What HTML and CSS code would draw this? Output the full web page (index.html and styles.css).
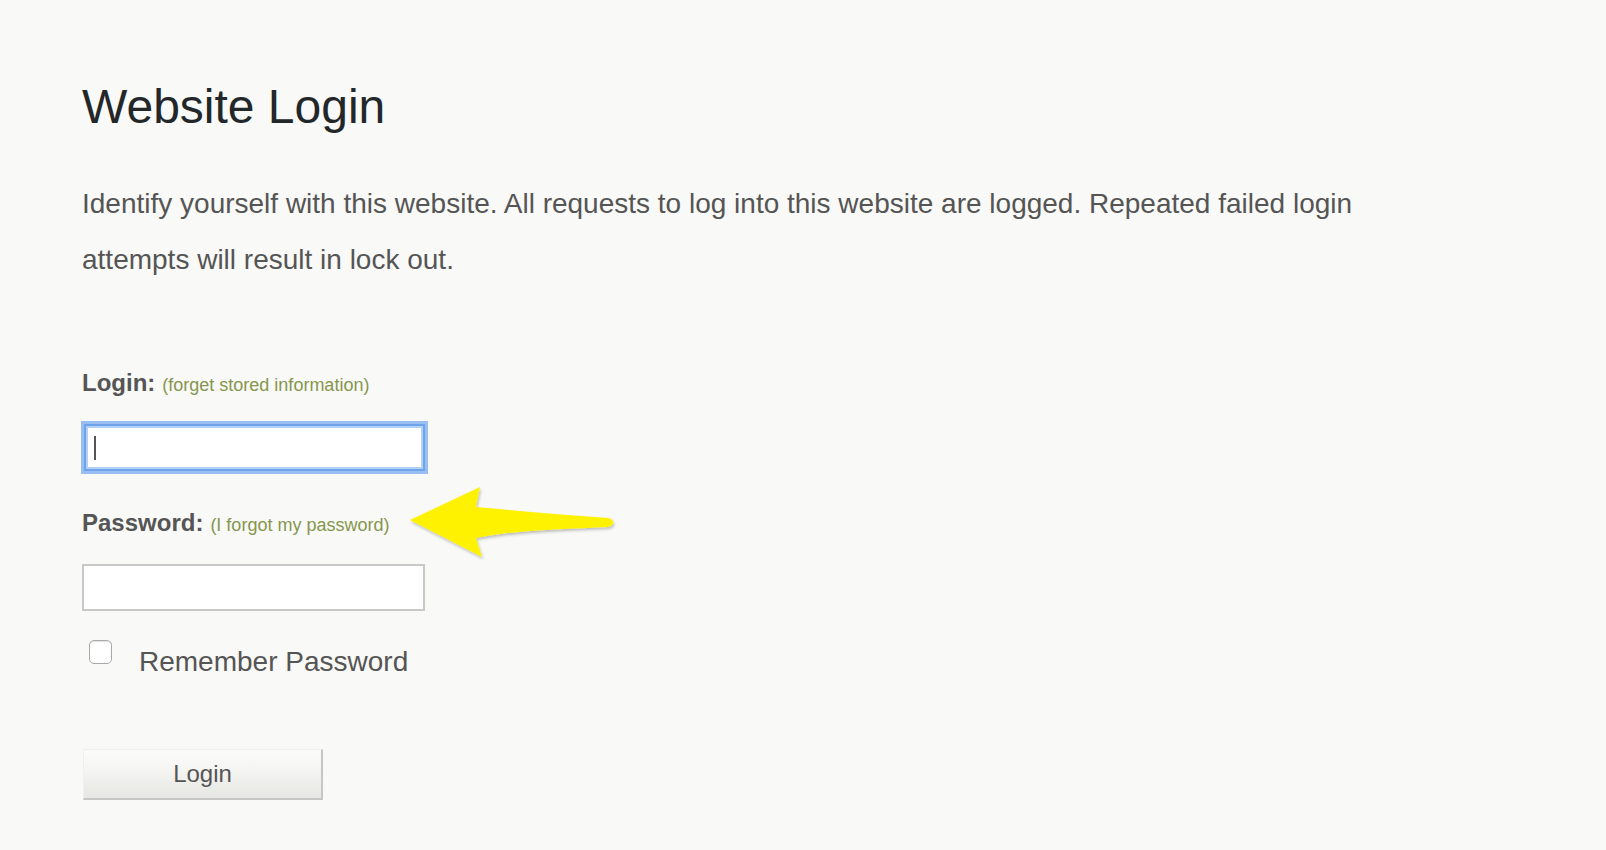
FILE: index.html
```html
<!DOCTYPE html>
<html lang="en">
<head>
<meta charset="utf-8">
<title>Website Login</title>
<link rel="stylesheet" href="styles.css">
</head>
<body>
<main class="page">
  <h1 class="title">Website Login</h1>
  <p class="intro">Identify yourself with this website. All requests to log into this website are logged. Repeated failed login attempts will result in lock out.</p>
  <form class="login-form">
    <div class="field-label"><span class="label">Login:</span><a class="hint" href="#">(forget stored information)</a></div>
    <div class="input-wrap">
      <input class="text-input focused" type="text" aria-label="Login">
      <span class="caret"></span>
    </div>
    <div class="field-label password-label">
      <span class="label">Password:</span><a class="hint" href="#">(I forgot my password)</a>
      <svg class="arrow" width="230" height="95" viewBox="0 0 230 95" aria-hidden="true">
        <defs>
          <filter id="sh" x="-10%" y="-20%" width="120%" height="140%">
            <feDropShadow dx="1" dy="2" stdDeviation="1.5" flood-color="#000" flood-opacity="0.25"/>
          </filter>
        </defs>
        <path d="M10 45 L80 12 L76 32 C120 36 165 40 208 43 C215 44 215 51 208 52 C165 54 115 55 76 63 L82 82 Z" fill="#fff200" filter="url(#sh)"/>
      </svg>
    </div>
    <input class="text-input" type="password" aria-label="Password">
    <label class="remember"><span class="checkbox"></span><span class="remember-text">Remember Password</span></label>
    <button class="btn" type="button">Login</button>
  </form>
</main>
</body>
</html>
```
FILE: styles.css
```css
html, body {
  margin: 0;
  padding: 0;
  background: #f9f9f7;
}
body {
  font-family: "Liberation Sans", Arial, Helvetica, sans-serif;
  color: #555;
}
.page {
  padding: 83px 0 0 82px;
}
.title {
  margin: 0;
  font-size: 48px;
  line-height: 48px;
  font-weight: normal;
  color: #23272a;
}
.intro {
  margin: 45px 0 0 0;
  width: 1320px;
  font-size: 28px;
  line-height: 56px;
  color: #555;
}
.login-form {
  margin-top: 80px;
  display: flex;
  flex-direction: column;
  align-items: flex-start;
}
.field-label {
  display: flex;
  align-items: baseline;
  gap: 7px;
  height: 30px;
  line-height: 30px;
}
.label {
  font-size: 24px;
  font-weight: bold;
  color: #555;
}
.hint {
  font-size: 18px;
  color: #86964e;
  text-decoration: none;
}
.password-label {
  position: relative;
  margin-top: 37px;
}
.arrow {
  position: absolute;
  left: 318px;
  top: -33px;
}
.input-wrap {
  position: relative;
  margin-top: 26px;
}
.text-input {
  display: block;
  box-sizing: border-box;
  width: 343px;
  height: 47px;
  margin: 0;
  padding: 0 10px;
  background: #fff;
  border: 2px solid #c8c8c8;
  font-size: 20px;
  outline: none;
}
.password-label + .text-input {
  margin-top: 26px;
}
.text-input.focused {
  margin-left: 2px;
  width: 341px;
  border: 2px solid #6fa3ec;
  box-shadow: 0 0 0 3px rgba(120, 170, 240, 0.75), inset 0 0 0 2px #b3d0f6;
}
.caret {
  position: absolute;
  left: 12px;
  top: 12px;
  width: 2px;
  height: 24px;
  background: #555;
}
.remember {
  display: flex;
  align-items: flex-start;
  margin-top: 29px;
  margin-left: 7px;
}
.checkbox {
  box-sizing: border-box;
  width: 23px;
  height: 24px;
  border: 1px solid #a9a9a9;
  border-radius: 5px;
  background: #fff;
  box-shadow: inset 0 1px 1px rgba(0,0,0,0.12);
}
.remember-text {
  margin-left: 27px;
  margin-top: 5px;
  font-size: 28px;
  line-height: 34px;
  color: #555;
}
.btn {
  margin-top: 70px;
  margin-left: 1px;
  width: 240px;
  height: 51px;
  padding: 0;
  font-family: "Liberation Sans", Arial, Helvetica, sans-serif;
  font-size: 24px;
  color: #555;
  border: 1px solid #efefef;
  border-right: 2px solid #c6c6c4;
  border-bottom: 2px solid #c6c6c4;
  background: linear-gradient(#fbfbfa 0%, #f6f6f4 35%, #e6e6e2 100%);
  cursor: pointer;
}
```
